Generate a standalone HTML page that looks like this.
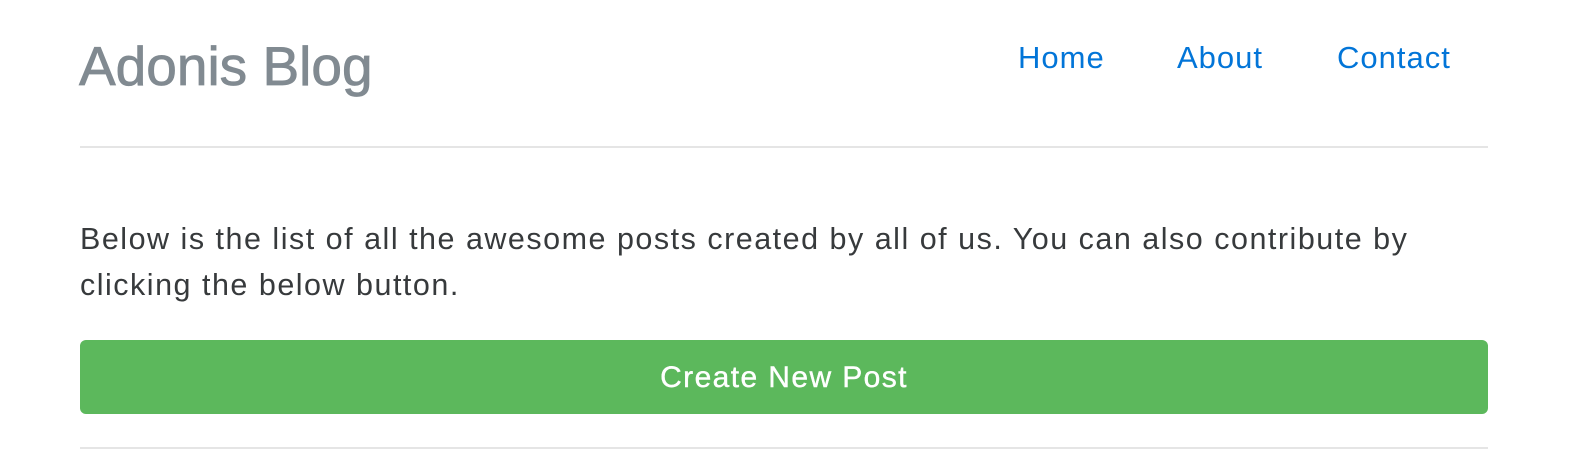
<!DOCTYPE html>
<html><head><style>
body{margin:0;background:#fff;font-family:"Liberation Sans",sans-serif;width:1572px;height:472px;overflow:hidden;position:relative}
.t{position:absolute;left:79px;top:32px;font-size:55px;color:#818a91;line-height:68px;white-space:nowrap;-webkit-text-stroke:0.8px #818a91}
.n{position:absolute;top:40px;font-size:31px;letter-spacing:1px;color:#0275d8;line-height:36px}
.hr{position:absolute;left:80px;width:1408px;height:2px;background:#e5e5e5}
.p{position:absolute;left:80px;top:216px;width:1420px;font-size:30.5px;letter-spacing:1.5px;line-height:46px;color:#373a3c}
.b{position:absolute;left:80px;top:340px;width:1408px;height:74px;background:#5cb85c;border-radius:6px;color:#fff;font-size:30px;letter-spacing:1.4px;text-align:center;line-height:76px;-webkit-text-stroke:0.4px #fff}
</style></head><body>
<div class="t">Adonis Blog</div>
<div class="n" style="left:1018px">Home</div>
<div class="n" style="left:1177px">About</div>
<div class="n" style="left:1337px">Contact</div>
<div class="hr" style="top:146px"></div>
<div class="p">Below is the list of all the awesome posts created by all of us. You can also contribute by clicking the below button.</div>
<div class="b">Create New Post</div>
<div class="hr" style="top:447px"></div>
</body></html>
